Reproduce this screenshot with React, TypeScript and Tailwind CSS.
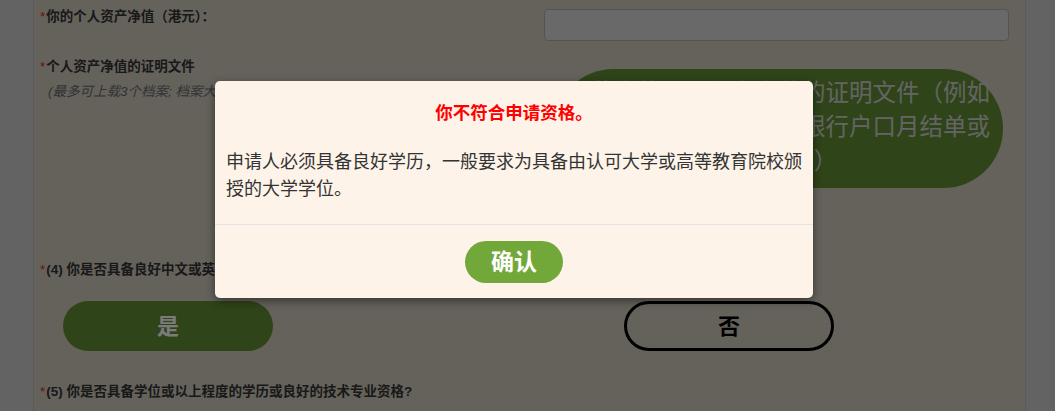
import React from "react";

const cjk = { fontFamily: '"Liberation Sans", "Noto Sans CJK SC", sans-serif' };

function Label({ children }: { children: React.ReactNode }) {
  return (
    <div className="flex items-center text-[13.5px] leading-[16px] font-bold text-[#333] whitespace-nowrap" style={cjk}>
      <span className="text-[#d42020] mr-[1px] font-normal">*</span>
      <span>{children}</span>
    </div>
  );
}

export default function App() {
  return (
    <div className="relative w-[1055px] h-[411px] overflow-hidden bg-[#c6c6c6]" style={cjk}>
      <div className="ml-[33px] w-[993px] h-full border-x border-[#b4b4b4] bg-[#cac4b9] pl-[6px]">
        {/* Row A */}
        <div className="flex items-start pt-[9px]">
          <div className="w-[504px]">
            <Label>你的个人资产净值（港元）：</Label>
          </div>
          <div className="w-[465px] h-[32px] rounded-[4px] border border-[#a9a9a9] bg-[#d2d2d2]" />
        </div>
        {/* Row B */}
        <div className="flex items-start mt-[18px]">
          <div className="w-[514px]">
            <Label>个人资产净值的证明文件</Label>
            <div className="mt-[9px] ml-[8px] text-[13.5px] leading-[16px] italic text-[#666] whitespace-nowrap">
              (最多可上载3个档案; 档案大小上限为5MB)
            </div>
          </div>
          <div className="mt-[10px] w-[449px] h-[119px] rounded-full bg-[#5f8833] pt-[7px] text-center text-[23.5px] leading-[34px] text-[#c8c8c8] whitespace-nowrap">
            <div>上载你的个人资产净值的证明文件（例如</div>
            <div>股票结单、基金结单、银行户口月结单或</div>
            <div>股票结单）</div>
          </div>
        </div>
        {/* Row C */}
        <div className="mt-[74px]">
          <Label>(4) 你是否具备良好中文或英文的书写及口语能力?</Label>
        </div>
        {/* Row D */}
        <div className="flex mt-[23px]">
          <button className="ml-[23px] w-[210px] h-[50px] rounded-full bg-[#5f8833] text-[22px] font-bold text-[#f6f6f6]">
            是
          </button>
          <button className="ml-[351px] w-[210px] h-[50px] rounded-full border-[3px] border-black text-[22px] font-bold text-black">
            否
          </button>
        </div>
        {/* Row E */}
        <div className="mt-[33px]">
          <Label>(5) 你是否具备学位或以上程度的学历或良好的技术专业资格?</Label>
        </div>
      </div>

      {/* overlay */}
      <div className="absolute inset-0 bg-black/50" />

      {/* dialog */}
      <div className="absolute left-[215px] top-[81px] w-[598px] h-[217px] rounded-[5px] bg-[#fdf3e8] shadow-[0_3px_10px_rgba(0,0,0,0.45)] flex flex-col">
        <div className="pt-[20px] text-center text-[17.5px] leading-[24px] font-bold text-[#ff0000]">
          你不符合申请资格。
        </div>
        <div className="mt-[24px] px-[11px] text-[18px] leading-[27px] text-[#333] whitespace-nowrap">
          <div>申请人必须具备良好学历，一般要求为具备由认可大学或高等教育院校颁</div>
          <div>授的大学学位。</div>
        </div>
        <div className="mt-[21px] border-t border-[#e3e3e3]" />
        <div className="flex justify-center pt-[16px]">
          <button className="w-[98px] h-[42px] rounded-full bg-[#72a83a] text-white text-[23px] font-bold leading-none">
            确认
          </button>
        </div>
      </div>
    </div>
  );
}
